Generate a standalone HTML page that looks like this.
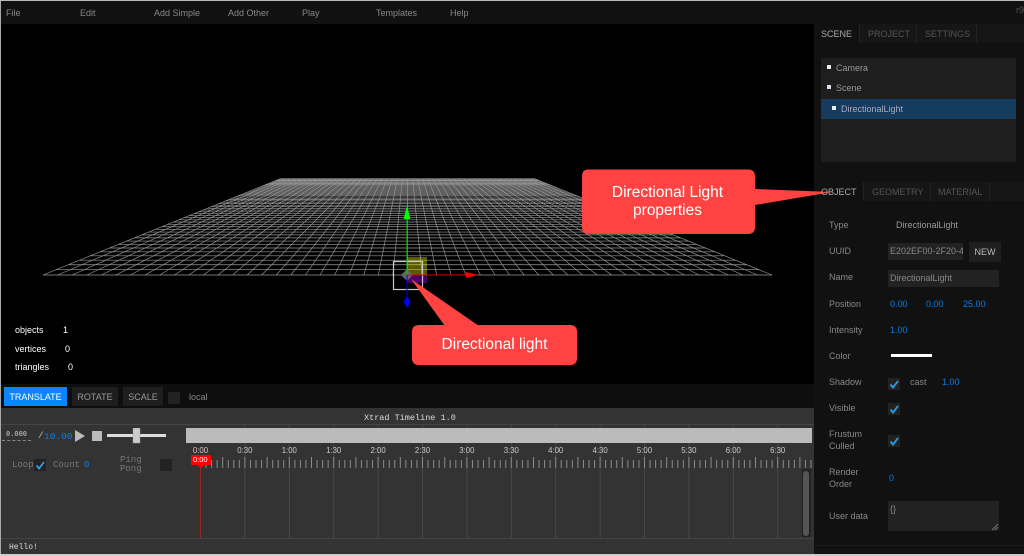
<!DOCTYPE html>
<html><head><meta charset="utf-8"><style>
html,body{margin:0;padding:0;background:#000}
#r{position:relative;width:1024px;height:556px;overflow:hidden;background:#000;font:9px "Liberation Sans",sans-serif;color:#888}
.a{position:absolute;white-space:nowrap}
.b{position:absolute}
.c{position:absolute;width:12px;height:12px;background:#222}
.c svg{position:absolute;left:1px;top:1px}
.v{color:#0b7be8}
.m{font-family:"Liberation Mono",monospace}
</style></head><body><div id="r">
<div class="b" style="left:0;top:0;width:1024px;height:24px;background:#111"></div>
<div class="b" style="left:0;top:0;width:1px;height:556px;background:#aaa"></div>
<div class="b" style="left:0;top:0;width:1024px;height:1px;background:#bbb"></div>
<span class="a" style="left:6px;top:8px">File</span>
<span class="a" style="left:80px;top:8px">Edit</span>
<span class="a" style="left:154px;top:8px">Add Simple</span>
<span class="a" style="left:228px;top:8px">Add Other</span>
<span class="a" style="left:302px;top:8px">Play</span>
<span class="a" style="left:376px;top:8px">Templates</span>
<span class="a" style="left:450px;top:8px">Help</span>
<span class="a" style="left:1016px;top:5px;color:#555">r9</span>

<svg class="b" id="g" style="left:0;top:0" width="814" height="384" viewBox="0 0 814 384"></svg>
<svg class="b" style="left:0;top:0" width="814" height="384" viewBox="0 0 814 384">
<rect x="407" y="257" width="20" height="18" fill="#ffff00" opacity=".35"/>
<rect x="407" y="275" width="20" height="8" fill="#8000c0" opacity=".55"/>
<rect x="393.500" y="261.500" width="29" height="28" fill="none" stroke="#c8c8c8" stroke-width="1.200"/>
<polygon points="401,275 407,269 413,275 407,281" fill="#666"/>
<path d="M407 275V212" stroke="#0c0" stroke-width="1"/>
<polygon points="407,206 403.500,219 410.500,219" fill="#0f0"/>
<path d="M407 275H466" stroke="#d00" stroke-width="1"/>
<polygon points="478,275 466,272 466,278" fill="#f00"/>
<path d="M407 275V298" stroke="#00d" stroke-width="1"/>
<polygon points="407,296 403.500,302 407,308 410.500,302" fill="#00f"/>
</svg>
<span class="a" style="left:15px;top:325px;color:#fff">objects</span><span class="a" style="left:63px;top:325px;color:#fff">1</span>
<span class="a" style="left:15px;top:344px;color:#fff">vertices</span><span class="a" style="left:65px;top:344px;color:#fff">0</span>
<span class="a" style="left:15px;top:362px;color:#fff">triangles</span><span class="a" style="left:68px;top:362px;color:#fff">0</span>

<div class="b" style="left:1px;top:384px;width:813px;height:24px;background:#0e0e0e"></div>
<div class="a" style="left:4px;top:387px;width:63px;height:19px;background:#0a84ff;color:#fff;text-align:center;line-height:20px">TRANSLATE</div>
<div class="a" style="left:72px;top:387px;width:46px;height:19px;background:#1e1e1e;color:#999;text-align:center;line-height:20px">ROTATE</div>
<div class="a" style="left:123px;top:387px;width:40px;height:19px;background:#1e1e1e;color:#999;text-align:center;line-height:20px">SCALE</div>
<div class="b" style="left:168px;top:392px;width:12px;height:12px;background:#222"></div>
<span class="a" style="left:189px;top:392px">local</span>

<div class="b" style="left:1px;top:408px;width:813px;height:146px;background:#333"></div>
<div class="b" style="left:1px;top:424px;width:813px;height:1px;background:#444"></div>
<span class="a m" style="left:364px;top:413px;color:#ddd;font-size:8.500px">Xtrad Timeline 1.0</span>
<svg class="b" id="t" style="left:0;top:425px" width="814" height="114" viewBox="0 425 814 114"></svg>
<div class="b" style="left:186px;top:428px;width:626px;height:15px;background:#bbb"></div>
<span class="a m" style="left:6px;top:431px;font-size:7px;color:#aaa;font-weight:bold">0.000</span>
<div class="b" style="left:2px;top:440px;width:29px;border-top:1px dashed #888"></div>
<span class="a m" style="left:38px;top:430px;font-size:9.500px;color:#bbb">/</span>
<span class="a m v" style="left:44px;top:431px;font-size:9.500px">10.00</span>
<svg class="b" style="left:74px;top:428px" width="95" height="16" viewBox="0 0 95 16">
<polygon points="1,2 11,8 1,14" fill="#bbb"/>
<rect x="18" y="3" width="10" height="10" fill="#bbb"/>
<rect x="33" y="6" width="59" height="3" fill="#ddd"/>
<rect x="59" y="0" width="7" height="15" fill="#ccc" stroke="#999" stroke-width=".5"/>
</svg>
<span class="a m" style="left:12px;top:460px;font-size:9px;color:#777">Loop</span>
<div class="c" style="left:34px;top:459px"><svg width="10" height="10" viewBox="0 0 10 10"><path d="M1.500 5.500L4 8.500 9 2" fill="none" stroke="#2a9fe8" stroke-width="1.800"/></svg></div>
<span class="a m" style="left:53px;top:460px;font-size:9px;color:#777">Count</span>
<span class="a m v" style="left:84px;top:460px;font-size:9px">0</span>
<span class="a m" style="left:120px;top:455px;font-size:9px;color:#777">Ping</span>
<span class="a m" style="left:120px;top:464px;font-size:9px;color:#777">Pong</span>
<div class="b" style="left:160px;top:459px;width:12px;height:12px;background:#222"></div>
<svg class="b" style="left:190px;top:455px" width="22" height="14" viewBox="0 0 22 14">
<rect x="1" y="0" width="20" height="10" fill="#f00"/><polygon points="7,10 15,10 11,13" fill="#f00"/></svg>
<span class="a" style="left:193px;top:455px;color:#fff;font-size:7.500px">0:00</span>
<div class="b" style="left:802px;top:469px;width:9px;height:68px;background:#222"></div>
<div class="b" style="left:803px;top:471px;width:6px;height:65px;background:#555;border-radius:3px"></div>
<div class="b" style="left:1px;top:538px;width:813px;height:1px;background:#444"></div>
<span class="a m" style="left:9px;top:543px;font-size:8px;color:#ddd">Hello!</span>
<div class="b" style="left:0;top:554px;width:1024px;height:2px;background:#ccc"></div>

<div class="b" style="left:814px;top:24px;width:210px;height:530px;background:#111"></div>
<div class="b" style="left:814px;top:24px;width:210px;height:19px;background:#161616"></div>
<div class="b" style="left:814px;top:24px;width:45px;height:20px;background:#111"></div>
<div class="b" style="left:859px;top:24px;width:1px;height:19px;background:#222"></div>
<div class="b" style="left:916px;top:24px;width:1px;height:19px;background:#222"></div>
<div class="b" style="left:976px;top:24px;width:1px;height:19px;background:#222"></div>
<span class="a" style="left:821px;top:29px;color:#aaa">SCENE</span>
<span class="a" style="left:868px;top:29px;color:#555">PROJECT</span>
<span class="a" style="left:925px;top:29px;color:#555">SETTINGS</span>
<div class="b" style="left:821px;top:58px;width:195px;height:104px;background:#1e1e1e"></div>
<div class="b" style="left:821px;top:99px;width:195px;height:20px;background:#153c5e"></div>
<div class="b" style="left:827px;top:65px;width:4px;height:4px;background:#eee"></div>
<span class="a" style="left:836px;top:63px;color:#999">Camera</span>
<div class="b" style="left:827px;top:85px;width:4px;height:4px;background:#dde"></div>
<span class="a" style="left:836px;top:83px;color:#999">Scene</span>
<div class="b" style="left:832px;top:106px;width:4px;height:4px;background:#eee"></div>
<span class="a" style="left:841px;top:104px;color:#aab">DirectionalLight</span>

<div class="b" style="left:814px;top:182px;width:210px;height:19px;background:#161616"></div>
<div class="b" style="left:814px;top:182px;width:49px;height:20px;background:#111"></div>
<div class="b" style="left:863px;top:182px;width:1px;height:19px;background:#222"></div>
<div class="b" style="left:930px;top:182px;width:1px;height:19px;background:#222"></div>
<div class="b" style="left:989px;top:182px;width:1px;height:19px;background:#222"></div>

<svg class="b" style="left:0;top:0" width="1024" height="556" viewBox="0 0 1024 556">
<path d="M588 169.500H748Q755 169.500 755 176.500V189L832 192 755 205V227Q755 234 748 234H589Q582 234 582 227V176.500Q582 169.500 588 169.500Z" fill="#ff4343"/>
<path d="M419 325H570Q577 325 577 332V358Q577 365 570 365H419Q412 365 412 358V332Q412 325 419 325ZM445 326L411 279 479 326Z" fill="#ff4343"/>
</svg>
<div class="a" style="left:581px;top:184px;width:173px;text-align:center;color:#fff;font-size:15.500px;line-height:18px">Directional Light<br>properties</div>
<div class="a" style="left:412px;top:336px;width:165px;text-align:center;color:#fff;font-size:15.500px;line-height:18px">Directional light</div>

<span class="a" style="left:821px;top:187px;color:#aaa">OBJECT</span>
<span class="a" style="left:872px;top:187px;color:#555">GEOMETRY</span>
<span class="a" style="left:938px;top:187px;color:#555">MATERIAL</span>

<span class="a" style="left:829px;top:220px">Type</span>
<span class="a" style="left:896px;top:220px;color:#999">DirectionalLight</span>
<span class="a" style="left:829px;top:246px">UUID</span>
<div class="a" style="left:888px;top:243px;width:75px;height:17px;background:#222;line-height:17px;overflow:hidden;padding-left:2px;box-sizing:border-box">E202EF00-2F20-4</div>
<div class="a" style="left:969px;top:242px;width:32px;height:20px;background:#1e1e1e;line-height:20px;text-align:center;color:#bbb">NEW</div>
<span class="a" style="left:829px;top:272px">Name</span>
<div class="a" style="left:888px;top:270px;width:111px;height:17px;background:#222;line-height:17px;padding-left:2px;box-sizing:border-box">DirectionalLight</div>
<span class="a" style="left:829px;top:299px">Position</span>
<span class="a v" style="left:890px;top:299px">0.00</span>
<span class="a v" style="left:926px;top:299px">0.00</span>
<span class="a v" style="left:963px;top:299px">25.00</span>
<span class="a" style="left:829px;top:325px">Intensity</span>
<span class="a v" style="left:890px;top:325px">1.00</span>
<span class="a" style="left:829px;top:351px">Color</span>
<div class="b" style="left:891px;top:354px;width:41px;height:3px;background:#fff"></div>
<span class="a" style="left:829px;top:377px">Shadow</span>
<div class="c" style="left:888px;top:378px"><svg width="10" height="10" viewBox="0 0 10 10"><path d="M1.500 5.500L4 8.500 9 2" fill="none" stroke="#2a9fe8" stroke-width="1.800"/></svg></div>
<span class="a" style="left:910px;top:377px">cast</span>
<span class="a v" style="left:942px;top:377px">1.00</span>
<span class="a" style="left:829px;top:403px">Visible</span>
<div class="c" style="left:888px;top:403px"><svg width="10" height="10" viewBox="0 0 10 10"><path d="M1.500 5.500L4 8.500 9 2" fill="none" stroke="#2a9fe8" stroke-width="1.800"/></svg></div>
<span class="a" style="left:829px;top:429px">Frustum</span>
<span class="a" style="left:829px;top:441px">Culled</span>
<div class="c" style="left:888px;top:435px"><svg width="10" height="10" viewBox="0 0 10 10"><path d="M1.500 5.500L4 8.500 9 2" fill="none" stroke="#2a9fe8" stroke-width="1.800"/></svg></div>
<span class="a" style="left:829px;top:467px">Render</span>
<span class="a" style="left:829px;top:479px">Order</span>
<span class="a v" style="left:889px;top:473px">0</span>
<span class="a" style="left:829px;top:511px">User data</span>
<div class="b" style="left:888px;top:501px;width:111px;height:30px;background:#222"></div>
<span class="a" style="left:890px;top:504px">{}</span>
<svg class="b" style="left:990px;top:522px" width="9" height="9" viewBox="0 0 9 9"><path d="M2 8L8 2M5 8L8 5" stroke="#777" stroke-width="1"/></svg>
<div class="b" style="left:814px;top:545px;width:210px;height:1px;background:#1c1c1c"></div>
</div>
<script>
var s='',N=50,k=1.86,cx=407.5,hw=364.5,yb=275,yv=127;
function S(t){return 1/(1+k*t)}
for(var i=0;i<=N;i++){var t=i/N,q=S(t),y=yb-(yb-yv)*(1-q),w=hw*q;
s+='<line x1="'+(cx-w)+'" y1="'+y+'" x2="'+(cx+w)+'" y2="'+y+'"/>';
var u=-1+2*i/N,q2=S(1);
s+='<line x1="'+(cx+u*hw)+'" y1="'+yb+'" x2="'+(cx+u*hw*q2)+'" y2="'+(yv+(yb-yv)*q2)+'"/>';}
document.getElementById('g').innerHTML='<g stroke="#999" stroke-width=".65">'+s+'</g>';
var h='',lab=['0:00','0:30','1:00','1:30','2:00','2:30','3:00','3:30','4:00','4:30','5:00','5:30','6:00','6:30'];
var st=44.4;
for(var j=0;j<14;j++){var x=200.5+j*st;
if(j>0)h+='<rect x="'+(x-.5)+'" y="425" width="1" height="113" fill="#484848"/>';
h+='<text x="'+x+'" y="453" text-anchor="middle" font-family="Liberation Sans" font-size="7.800" fill="#ccc">'+lab[j]+'</text>';}
for(var n=0;n<112;n++){var x2=200.5+n*st/8;if(x2>812)break;
var tall=n%4==0;
h+='<rect x="'+(x2-.5)+'" y="'+(tall?457:460)+'" width="1" height="'+(tall?11:8)+'" fill="#8c8c8c"/>';}
h+='<rect x="200" y="464" width="1" height="74" fill="#a32020"/>';
document.getElementById('t').innerHTML=h;
</script>
</body></html>
